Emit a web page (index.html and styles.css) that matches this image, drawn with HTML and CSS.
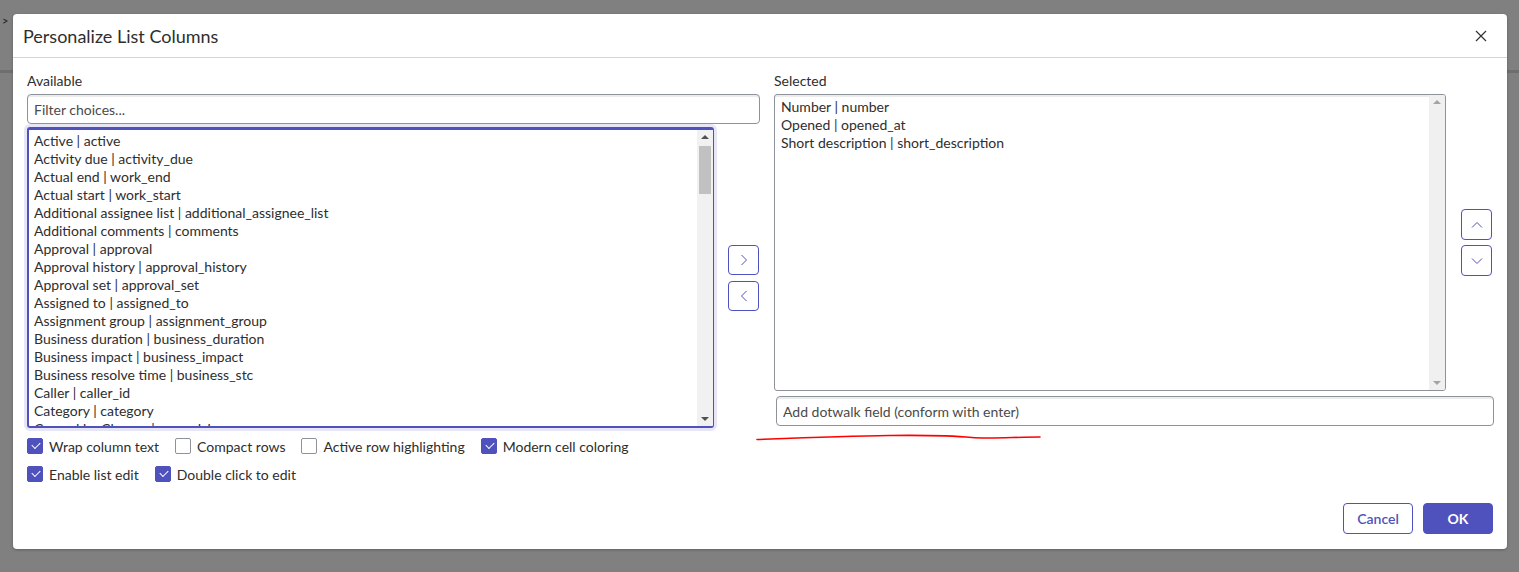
FILE: index.html
```html
<!DOCTYPE html>
<html lang="en">
<head>
    <meta charset="UTF-8">
    <title>Personalize List Columns</title>
    <link rel="stylesheet" href="styles.css">
</head>
<body>
    <!-- page behind the modal -->
    <div class="page-crumb">&gt;</div>
    <div class="page-line line-a"></div>
    <div class="page-line line-b"></div>

    <div class="modal">
        <div class="modal-header">
            <h1>Personalize List Columns</h1>
            <button class="close-btn" aria-label="Close">
                <svg width="12" height="12" viewBox="0 0 12 12"><path d="M1 1L11 11M11 1L1 11" stroke="#333" stroke-width="1.2" fill="none"/></svg>
            </button>
        </div>

        <div class="modal-body">
            <div class="columns">
                <!-- Available -->
                <div class="column">
                    <label class="col-label">Available</label>
                    <input type="text" class="text-input" placeholder="Filter choices...">
                    <div class="list-row available-row">
                        <div class="listbox focused">
                            <ul class="items">
                                <li>Active | active</li>
                                <li>Activity due | activity_due</li>
                                <li>Actual end | work_end</li>
                                <li>Actual start | work_start</li>
                                <li>Additional assignee list | additional_assignee_list</li>
                                <li>Additional comments | comments</li>
                                <li>Approval | approval</li>
                                <li>Approval history | approval_history</li>
                                <li>Approval set | approval_set</li>
                                <li>Assigned to | assigned_to</li>
                                <li>Assignment group | assignment_group</li>
                                <li>Business duration | business_duration</li>
                                <li>Business impact | business_impact</li>
                                <li>Business resolve time | business_stc</li>
                                <li>Caller | caller_id</li>
                                <li>Category | category</li>
                                <li>Caused by Change | caused_by</li>
                                <li>Change Request | rfc</li>
                            </ul>
                            <div class="scrollbar">
                                <span class="arrow up"></span>
                                <span class="thumb"></span>
                                <span class="arrow down"></span>
                            </div>
                        </div>
                        <div class="move-buttons lr">
                            <button class="icon-btn">
                                <svg width="8" height="12" viewBox="0 0 8 12"><path d="M1.5 1L6.5 6L1.5 11" stroke="#4f52bc" fill="none"/></svg>
                            </button>
                            <button class="icon-btn">
                                <svg width="8" height="12" viewBox="0 0 8 12"><path d="M6.5 1L1.5 6L6.5 11" stroke="#4f52bc" fill="none"/></svg>
                            </button>
                        </div>
                    </div>
                </div>

                <!-- Selected -->
                <div class="column">
                    <label class="col-label">Selected</label>
                    <div class="list-row">
                        <div class="listbox selected-box">
                            <ul class="items">
                                <li>Number | number</li>
                                <li>Opened | opened_at</li>
                                <li>Short description | short_description</li>
                            </ul>
                            <div class="scrollbar plain">
                                <span class="arrow up"></span>
                                <span class="arrow down"></span>
                            </div>
                        </div>
                        <div class="move-buttons ud">
                            <button class="icon-btn">
                                <svg width="12" height="8" viewBox="0 0 12 8"><path d="M1 6.5L6 1.5L11 6.5" stroke="#4f52bc" fill="none"/></svg>
                            </button>
                            <button class="icon-btn">
                                <svg width="12" height="8" viewBox="0 0 12 8"><path d="M1 1.5L6 6.5L11 1.5" stroke="#4f52bc" fill="none"/></svg>
                            </button>
                        </div>
                    </div>
                    <input type="text" class="text-input dotwalk" placeholder="Add dotwalk field (conform with enter)">
                </div>
            </div>

            <div class="options">
                <div class="option-row">
                    <label class="check"><span class="box on"></span>Wrap column text</label>
                    <label class="check"><span class="box"></span>Compact rows</label>
                    <label class="check"><span class="box"></span>Active row highlighting</label>
                    <label class="check"><span class="box on"></span>Modern cell coloring</label>
                </div>
                <div class="option-row">
                    <label class="check"><span class="box on"></span>Enable list edit</label>
                    <label class="check"><span class="box on"></span>Double click to edit</label>
                </div>
            </div>
        </div>

        <div class="modal-footer">
            <button class="btn btn-outline">Cancel</button>
            <button class="btn btn-primary">OK</button>
        </div>
    </div>

    <!-- red annotation stroke -->
    <svg class="annotation" width="300" height="12" viewBox="0 0 300 12">
        <path d="M1 7.5 C 40 6, 90 4, 133 3.5 S 200 4, 216 5.5 S 260 5, 284 5" stroke="#f00" stroke-width="1.6" fill="none" stroke-linecap="round"/>
    </svg>
</body>
</html>
```

FILE: styles.css
```css
* {
    box-sizing: border-box;
}
body {
    margin: 0;
    padding: 14px 12px 0 13px;
    height: 572px;
    overflow: hidden;
    background-color: #808080;
    font-family: Lato, "Open Sans", Arial, sans-serif;
    color: #2e2e2e;
    position: relative;
}
.page-crumb {
    position: absolute;
    left: 2px;
    top: 14px;
    font-size: 11px;
    color: #1a1a1a;
}
.page-line {
    position: absolute;
    height: 3px;
    background-color: #6e6e6e;
}
.line-a {
    left: 0;
    top: 70px;
    width: 13px;
}
.line-b {
    right: 0;
    top: 70px;
    width: 12px;
}
.modal {
    width: 1494px;
    height: 535px;
    background-color: #fff;
    border-radius: 4px;
    box-shadow: 0 1px 3px rgba(0, 0, 0, 0.25);
    display: flex;
    flex-direction: column;
    position: relative;
}
.modal-header {
    height: 44px;
    padding: 0 19px 0 10px;
    border-bottom: 1px solid #d4d4d9;
    display: flex;
    align-items: center;
    justify-content: space-between;
}
.modal-header h1 {
    margin: 0;
    font-size: 18px;
    font-weight: normal;
    color: #2e2e2e;
}
.close-btn {
    border: none;
    background: none;
    padding: 0;
    width: 14px;
    height: 14px;
    display: flex;
    align-items: center;
    justify-content: center;
}
.modal-body {
    padding: 14px 14px 0 14px;
}
.columns {
    display: grid;
    grid-template-columns: 733px 720px;
    gap: 14px;
}
.column {
    display: flex;
    flex-direction: column;
}
.col-label {
    font-size: 14px;
    line-height: 18px;
    margin-bottom: 4px;
    color: #2e2e2e;
}
.text-input {
    height: 30px;
    border: 1px solid #8e929b;
    border-radius: 4px;
    padding: 0 6px;
    font-family: inherit;
    font-size: 14px;
    color: #2e2e2e;
    box-shadow: inset 0 2px 0 #ececec;
    outline: none;
}
.text-input::placeholder {
    color: #4a4a4a;
}
.list-row {
    display: flex;
    align-items: center;
}
.available-row {
    margin-top: 3px;
    gap: 14px;
}
.listbox {
    display: flex;
    background-color: #fff;
    overflow: hidden;
}
.listbox.focused {
    width: 687px;
    height: 301px;
    border: 2px solid #4f52bc;
    border-right-width: 1px;
    border-top-width: 3px;
    box-shadow: 0 0 0 3px #e6e6f6;
    border-radius: 3px;
}
.selected-box {
    width: 672px;
    height: 297px;
    border: 1px solid #8e929b;
    border-radius: 3px;
    box-shadow: inset 0 2px 0 #ececec;
}
.items {
    list-style: none;
    margin: 0;
    padding: 2px 5px;
    flex: 1;
    font-size: 14px;
    line-height: 18px;
    overflow: hidden;
    white-space: nowrap;
}
.selected-box .items {
    padding: 3px 6px;
}
.scrollbar {
    width: 16px;
    background-color: #f1f1f1;
    position: relative;
    display: flex;
    flex-direction: column;
    justify-content: space-between;
    align-items: center;
    padding: 5px 0;
}
.scrollbar .thumb {
    position: absolute;
    top: 16px;
    left: 2px;
    width: 12px;
    height: 48px;
    background-color: #c1c1c1;
}
.arrow {
    width: 0;
    height: 0;
    border-left: 4px solid transparent;
    border-right: 4px solid transparent;
}
.arrow.up {
    border-bottom: 4px solid #a3a3a3;
}
.arrow.down {
    border-top: 4px solid #a3a3a3;
}
.listbox.focused .arrow.up {
    border-bottom-color: #505050;
}
.listbox.focused .arrow.down {
    border-top-color: #505050;
}
.selected-box .scrollbar {
    background-color: #f0f0f0;
}
.move-buttons {
    display: flex;
    flex-direction: column;
}
.move-buttons.lr {
    gap: 6px;
}
.move-buttons.ud {
    gap: 5px;
    margin-left: 15px;
}
.icon-btn {
    width: 31px;
    height: 30px;
    border: 1px solid #4f52bc;
    border-radius: 4px;
    background-color: #fff;
    padding: 0;
    display: flex;
    align-items: center;
    justify-content: center;
}
.move-buttons.ud .icon-btn {
    height: 31px;
}
.dotwalk {
    margin-top: 5px;
    margin-left: 2px;
    width: 718px;
}
.options {
    margin-top: 8px;
}
.option-row {
    display: flex;
    height: 20px;
    align-items: center;
    margin-bottom: 8px;
}
.check {
    display: flex;
    align-items: center;
    font-size: 14px;
    color: #2e2e2e;
    margin-right: 16px;
    white-space: nowrap;
}
.box {
    width: 16px;
    height: 16px;
    border: 1px solid #8e929b;
    border-radius: 2px;
    margin-right: 6px;
    position: relative;
    background-color: #fff;
    flex-shrink: 0;
}
.box.on {
    background-color: #4f52bc;
    border-color: #4f52bc;
}
.box.on::after {
    content: "";
    position: absolute;
    left: 4px;
    top: 3px;
    width: 7px;
    height: 4px;
    border-left: 1.5px solid #fff;
    border-bottom: 1.5px solid #fff;
    transform: rotate(-45deg);
}
.modal-footer {
    margin-top: auto;
    padding: 0 14px 15px 0;
    display: flex;
    justify-content: flex-end;
    gap: 10px;
}
.btn {
    height: 31px;
    border-radius: 4px;
    font-family: inherit;
    font-size: 14px;
    padding: 0;
}
.btn-outline {
    width: 70px;
    border: 1px solid #4f52bc;
    background-color: #fff;
    color: #4f52bc;
    font-weight: 600;
}
.btn-primary {
    width: 70px;
    border: 1px solid #4f52bc;
    background-color: #4f52bc;
    color: #fff;
    font-weight: bold;
}
.annotation {
    position: absolute;
    left: 756px;
    top: 432px;
}
```
